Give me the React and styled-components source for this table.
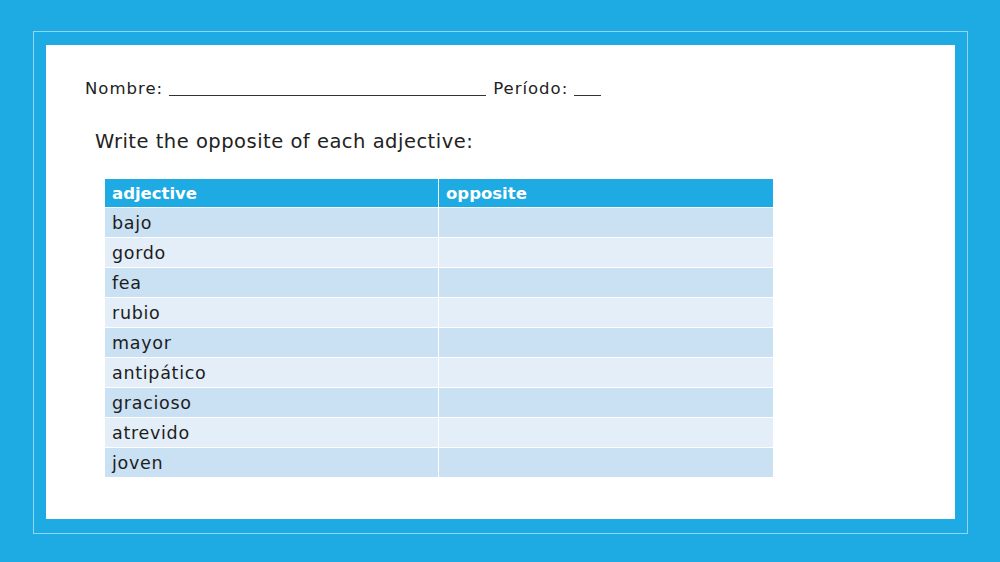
import React from "react";
import styled, { createGlobalStyle } from "styled-components";

const adjectives = [
  "bajo",
  "gordo",
  "fea",
  "rubio",
  "mayor",
  "antipático",
  "gracioso",
  "atrevido",
  "joven",
];

const GlobalStyle = createGlobalStyle`
  html, body {
    margin: 0;
    padding: 0;
    background: #1eabe3;
  }
  body {
    font-family: "DejaVu Sans", "Liberation Sans", sans-serif;
  }
`;

const Page = styled.main`
  width: 1000px;
  height: 562px;
  box-sizing: border-box;
  padding: 31px 32px 28px 33px;
  background: #1eabe3;
`;

const Frame = styled.div`
  height: 100%;
  box-sizing: border-box;
  border: 1px solid #8ed6f3;
  padding: 13px 12px 14px 12px;
`;

const Sheet = styled.section`
  height: 100%;
  box-sizing: border-box;
  background: #ffffff;
  padding: 34px 0 0 39px;
  display: flex;
  flex-direction: column;
`;

const NameLine = styled.div`
  display: flex;
  align-items: baseline;
  font-size: 16.5px;
  letter-spacing: 1px;
  color: #222;
  height: 24px;
`;

const Blank = styled.span`
  display: inline-block;
  width: ${(p) => p.$w}px;
  border-bottom: 1px solid #333;
  margin: 0 7px 0 6px;
  transform: translateY(2px);
`;

const Instruction = styled.h2`
  margin: 27px 0 0 10px;
  font-weight: normal;
  font-size: 19.5px;
  letter-spacing: 0.5px;
  color: #222;
`;

const Table = styled.div`
  margin: 26px 0 0 20px;
  width: 668px;
  display: grid;
  grid-template-columns: 333px 1fr;
  row-gap: 1px;
  column-gap: 1px;
  background: #ffffff;
`;

const Cell = styled.div`
  height: ${(p) => (p.$head ? 28 : 29)}px;
  box-sizing: border-box;
  padding-left: 7px;
  display: flex;
  align-items: center;
  font-size: ${(p) => (p.$head ? 16.5 : 17.5)}px;
  letter-spacing: ${(p) => (p.$head ? 0 : 0.7)}px;
  font-weight: ${(p) => (p.$head ? "bold" : "normal")};
  color: ${(p) => (p.$head ? "#ffffff" : "#1d1d1d")};
  background: ${(p) =>
    p.$head ? "#1eabe3" : p.$alt ? "#e3eef8" : "#cae0f3"};
`;

export default function App() {
  return (
    <>
      <GlobalStyle />
      <Page>
        <Frame>
          <Sheet>
            <NameLine>
              Nombre:<Blank $w={317} />Período:<Blank $w={27} />
            </NameLine>
            <Instruction>Write the opposite of each adjective:</Instruction>
            <Table>
              <Cell $head>adjective</Cell>
              <Cell $head>opposite</Cell>
              {adjectives.map((a, i) => (
                <React.Fragment key={a}>
                  <Cell $alt={i % 2 === 1}>{a}</Cell>
                  <Cell $alt={i % 2 === 1} />
                </React.Fragment>
              ))}
            </Table>
          </Sheet>
        </Frame>
      </Page>
    </>
  );
}
